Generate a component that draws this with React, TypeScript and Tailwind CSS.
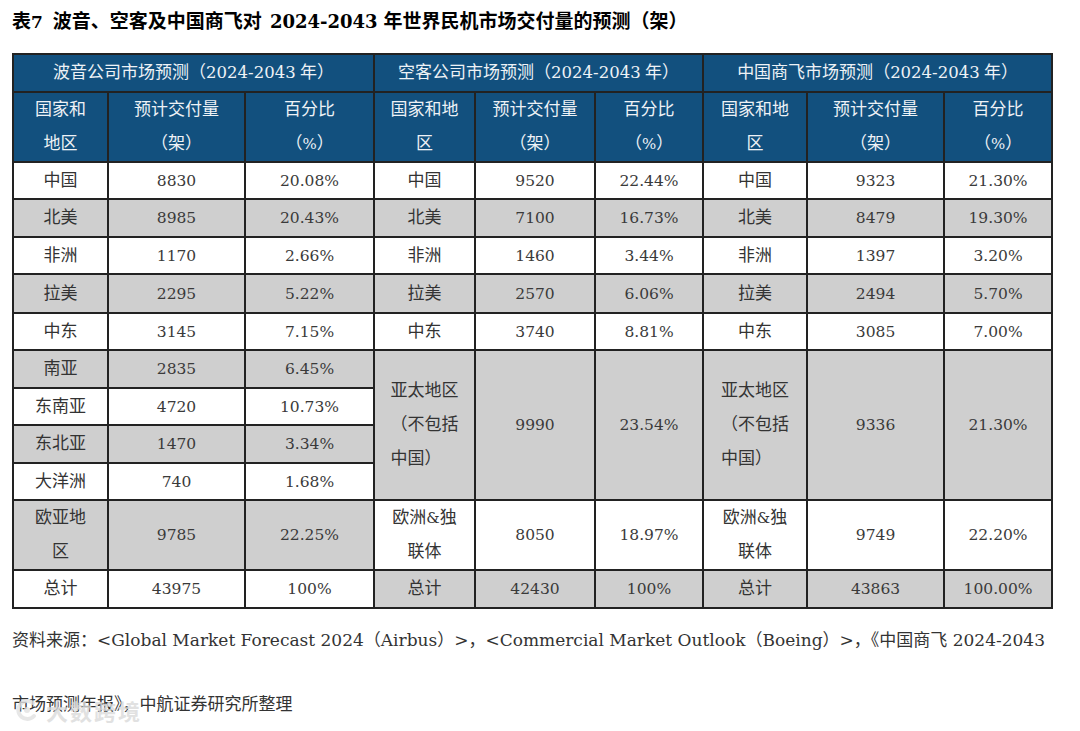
import React from "react";

const FONT = '"Liberation Serif", "Noto Sans CJK SC", serif';
const LATIN = '"DejaVu Serif", "Noto Sans CJK SC", serif';

// Latin / digit run in a wider serif, like the source document's number font
function L({ children, className = "" }: { children: React.ReactNode; className?: string }) {
  return (
    <span className={className} style={{ fontFamily: LATIN }}>
      {children}
    </span>
  );
}

type Row = {
  region: React.ReactNode;
  qty: string;
  pct: string;
  gray: boolean;
};

// Boeing side has more regional rows than Airbus / COMAC, so render per row with rowSpans
const boeing: Row[] = [
  { region: "中国", qty: "8830", pct: "20.08%", gray: false },
  { region: "北美", qty: "8985", pct: "20.43%", gray: true },
  { region: "非洲", qty: "1170", pct: "2.66%", gray: false },
  { region: "拉美", qty: "2295", pct: "5.22%", gray: true },
  { region: "中东", qty: "3145", pct: "7.15%", gray: false },
  { region: "南亚", qty: "2835", pct: "6.45%", gray: true },
  { region: "东南亚", qty: "4720", pct: "10.73%", gray: false },
  { region: "东北亚", qty: "1470", pct: "3.34%", gray: true },
  { region: "大洋洲", qty: "740", pct: "1.68%", gray: false },
  { region: <>欧亚地<br />区</>, qty: "9785", pct: "22.25%", gray: true },
  { region: "总计", qty: "43975", pct: "100%", gray: false },
];

type Side = { region: React.ReactNode; qty: string; pct: string; gray: boolean; span?: number };

const euro = (
  <>
    欧洲<L className="text-[15px]">&amp;</L>独<br />联体
  </>
);

const airbus: (Side | null)[] = [
  { region: "中国", qty: "9520", pct: "22.44%", gray: false },
  { region: "北美", qty: "7100", pct: "16.73%", gray: true },
  { region: "非洲", qty: "1460", pct: "3.44%", gray: false },
  { region: "拉美", qty: "2570", pct: "6.06%", gray: true },
  { region: "中东", qty: "3740", pct: "8.81%", gray: false },
  { region: "apac", qty: "9990", pct: "23.54%", gray: true, span: 4 },
  null,
  null,
  null,
  { region: euro, qty: "8050", pct: "18.97%", gray: false },
  { region: "总计", qty: "42430", pct: "100%", gray: true },
];

const comac: (Side | null)[] = [
  { region: "中国", qty: "9323", pct: "21.30%", gray: false },
  { region: "北美", qty: "8479", pct: "19.30%", gray: true },
  { region: "非洲", qty: "1397", pct: "3.20%", gray: false },
  { region: "拉美", qty: "2494", pct: "5.70%", gray: true },
  { region: "中东", qty: "3085", pct: "7.00%", gray: false },
  { region: "apac", qty: "9336", pct: "21.30%", gray: true, span: 4 },
  null,
  null,
  null,
  { region: euro, qty: "9749", pct: "22.20%", gray: false },
  { region: "总计", qty: "43863", pct: "100.00%", gray: true },
];

const rowHeights = [37, 38, 37, 39, 37, 38, 37, 38, 37, 69, 38];

function Apac() {
  return (
    <span className="inline-block text-left leading-[34px]">
      亚太地区
      <br />
      （不包括
      <br />
      中国）
    </span>
  );
}

function Td({
  gray,
  span,
  num,
  children,
}: {
  gray: boolean;
  span?: number;
  num?: boolean;
  children: React.ReactNode;
}) {
  return (
    <td
      rowSpan={span}
      className={`border-2 border-[#222] p-0 text-center align-middle leading-[34px] ${
        gray ? "bg-[#cfcfcf]" : "bg-white"
      } ${num ? "text-[15.5px] text-[#3a3a3a]" : ""}`}
      style={num ? { fontFamily: LATIN } : undefined}
    >
      {children}
    </td>
  );
}

function SideCells({ s }: { s: Side | null }) {
  if (!s) return null;
  return (
    <>
      <Td gray={s.gray} span={s.span}>
        {s.region === "apac" ? <Apac /> : s.region}
      </Td>
      <Td gray={s.gray} span={s.span} num>
        {s.qty}
      </Td>
      <Td gray={s.gray} span={s.span} num>
        {s.pct}
      </Td>
    </>
  );
}

const th =
  "border-2 border-[#222] p-0 text-center align-middle font-normal leading-[34px] bg-[#12507e] text-[#eef2f6]";

function GroupTitle({ name }: { name: string }) {
  return (
    <>
      {name}（<L className="text-[16.5px]">2024-2043</L> 年）
    </>
  );
}

export default function App() {
  return (
    <div
      className="relative h-[731px] w-[1080px] overflow-hidden bg-white text-[#333]"
      style={{ fontFamily: FONT }}
    >
      <h1 className="pl-[12px] pt-[8px] text-[19px] font-bold leading-[28px] text-black">
        表<L className="text-[17px]">7</L>
        <span className="inline-block w-[10px]" />
        波音、空客及中国商飞对
        <span className="inline-block w-[8px]" />
        <L className="text-[18px]">2024-2043</L>
        <span className="inline-block w-[6px]" />
        年世界民机市场交付量的预测（架）
      </h1>

      <table className="ml-[12px] mt-[17px] w-[1039px] table-fixed border-collapse text-[17px]">
        <colgroup>
          <col className="w-[95px]" />
          <col className="w-[137px]" />
          <col className="w-[129px]" />
          <col className="w-[101px]" />
          <col className="w-[120px]" />
          <col className="w-[108px]" />
          <col className="w-[104px]" />
          <col className="w-[137px]" />
          <col className="w-[108px]" />
        </colgroup>
        <thead>
          <tr className="h-[38px]">
            <th colSpan={3} className={th}><GroupTitle name="波音公司市场预测" /></th>
            <th colSpan={3} className={th}><GroupTitle name="空客公司市场预测" /></th>
            <th colSpan={3} className={th}><GroupTitle name="中国商飞市场预测" /></th>
          </tr>
          <tr className="h-[69px]">
            <th className={th}>国家和<br />地区</th>
            <th className={th}>预计交付量<br />（架）</th>
            <th className={th}>百分比<br />（<L className="text-[15px]">%</L>）</th>
            <th className={th}>国家和地<br />区</th>
            <th className={th}>预计交付量<br />（架）</th>
            <th className={th}>百分比<br />（<L className="text-[15px]">%</L>）</th>
            <th className={th}>国家和地<br />区</th>
            <th className={th}>预计交付量<br />（架）</th>
            <th className={th}>百分比<br />（<L className="text-[15px]">%</L>）</th>
          </tr>
        </thead>
        <tbody>
          {boeing.map((b, i) => (
            <tr key={i} style={{ height: rowHeights[i] }}>
              <Td gray={b.gray}>{b.region}</Td>
              <Td gray={b.gray} num>{b.qty}</Td>
              <Td gray={b.gray} num>{b.pct}</Td>
              <SideCells s={airbus[i]} />
              <SideCells s={comac[i]} />
            </tr>
          ))}
        </tbody>
      </table>

      <div className="mt-[18px] pl-[12px] text-[17px] leading-[26px] text-[#333]">
        <p className="whitespace-nowrap">
          资料来源：
          <L className="text-[17px]">&lt;Global Market Forecast 2024</L>（
          <L className="text-[17px]">Airbus</L>）<L className="text-[17px]">&gt;</L>，
          <L className="text-[17px]">&lt;Commercial Market Outlook</L>（
          <L className="text-[17px]">Boeing</L>）<L className="text-[17px]">&gt;</L>，《中国商飞
          <L className="text-[17px]"> 2024-2043</L>
        </p>
        <p className="mt-[38px] whitespace-nowrap">市场预测年报》，中航证券研究所整理</p>
      </div>

      {/* watermark */}
      <div className="pointer-events-none absolute left-[14px] top-[697px] flex items-center gap-[6px] opacity-80">
        <svg width="26" height="26" viewBox="0 0 26 26" aria-hidden>
          <path
            d="M19 6 A9 9 0 1 0 20 19"
            fill="none"
            stroke="#e2e2e2"
            strokeWidth="4"
            strokeLinecap="round"
          />
          <circle cx="13" cy="13" r="3" fill="#e2e2e2" />
        </svg>
        <span
          className="text-[22px] font-bold leading-none tracking-[2px] text-[#dadada]"
          style={{ fontFamily: '"Noto Sans CJK SC", sans-serif' }}
        >
          大数跨境
        </span>
      </div>
    </div>
  );
}
